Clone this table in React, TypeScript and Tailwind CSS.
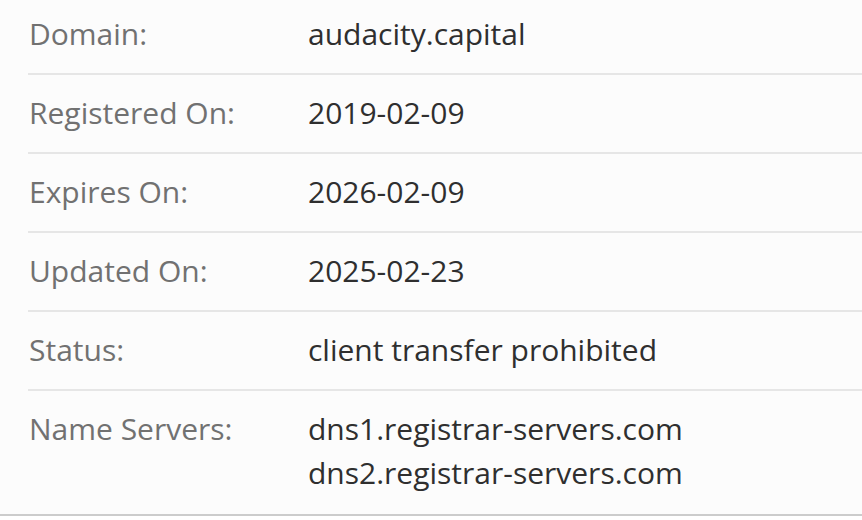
const rows: [string, string[]][] = [
  ['Domain:', ['audacity.capital']],
  ['Registered On:', ['2019-02-09']],
  ['Expires On:', ['2026-02-09']],
  ['Updated On:', ['2025-02-23']],
  ['Status:', ['client transfer prohibited']],
  ['Name Servers:', ['dns1.registrar-servers.com', 'dns2.registrar-servers.com']],
];

export default function App() {
  return (
    <div className="w-[862px] h-[520px] bg-white font-['Open_Sans',sans-serif]">
      <div className="bg-[#fcfcfc] border-b-2 border-[#cccccc]">
        <dl className="pl-[28px]">
          {rows.map(([label, values], i) => {
            const first = i === 0;
            const last = i === rows.length - 1;
            return (
              <div
                key={label}
                className={
                  'flex text-[30px] leading-[44px] ' +
                  (first ? 'pt-[12px] ' : 'pt-[16px] ') +
                  (last ? 'pb-[19px]' : 'pb-[17px] border-b-2 border-[#e6e6e6]')
                }
              >
                <dt className="w-[280px] shrink-0 pl-px text-[#717171]">{label}</dt>
                <dd className="text-[#2f2f2f]">
                  {values.map(v => (
                    <div key={v}>{v}</div>
                  ))}
                </dd>
              </div>
            );
          })}
        </dl>
      </div>
    </div>
  );
}
